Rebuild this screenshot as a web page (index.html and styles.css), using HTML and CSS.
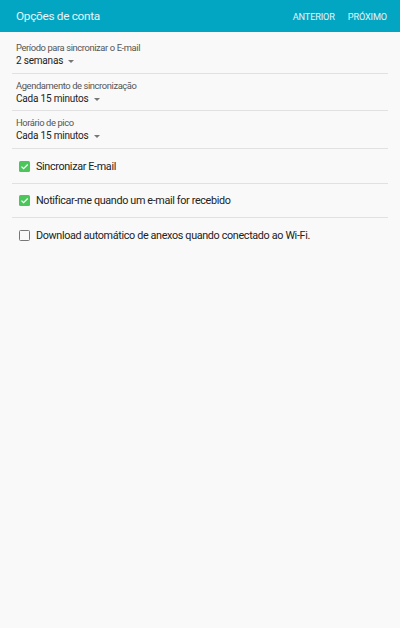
FILE: index.html
```html
<!DOCTYPE html>
<html lang="pt">
<head>
<meta charset="utf-8">
<link rel="stylesheet" href="styles.css">
</head>
<body>
<header class="appbar">
  <div class="title">Opções de conta</div>
  <nav class="actions">
    <span class="action">ANTERIOR</span>
    <span class="action">PRÓXIMO</span>
  </nav>
</header>
<main class="list">
  <div class="item select first">
    <div class="label">Período para sincronizar o E-mail</div>
    <div class="value">2 semanas <span class="caret"></span></div>
  </div>
  <div class="item select">
    <div class="label">Agendamento de sincronização</div>
    <div class="value">Cada 15 minutos <span class="caret"></span></div>
  </div>
  <div class="item select third">
    <div class="label">Horário de pico</div>
    <div class="value">Cada 15 minutos <span class="caret"></span></div>
  </div>
  <div class="item check">
    <span class="box on"><svg viewBox="0 0 12 12" width="11" height="11"><path d="M2.7 6.1 L5 8.4 L9.5 3.8" fill="none" stroke="#fff" stroke-width="1.4"/></svg></span>
    <span class="text">Sincronizar E-mail</span>
  </div>
  <div class="item check second">
    <span class="box on"><svg viewBox="0 0 12 12" width="11" height="11"><path d="M2.7 6.1 L5 8.4 L9.5 3.8" fill="none" stroke="#fff" stroke-width="1.4"/></svg></span>
    <span class="text">Notificar-me quando um e-mail for recebido</span>
  </div>
  <div class="item check last">
    <span class="box off"></span>
    <span class="text">Download automático de anexos quando conectado ao Wi-Fi.</span>
  </div>
</main>
</body>
</html>
```
FILE: styles.css
```css
html, body {
  margin: 0;
  padding: 0;
}
body {
  background: #f9f9f9;
  font-family: Roboto, "Liberation Sans", sans-serif;
  width: 400px;
  height: 628px;
}
.appbar {
  height: 32px;
  background: #02a6c3;
  display: flex;
  align-items: center;
  justify-content: space-between;
  padding: 0 13px 0 16px;
  box-sizing: border-box;
}
.title {
  color: #e3f6fa;
  font-size: 11.8px;
  letter-spacing: -0.3px;
}
.actions {
  display: flex;
  gap: 13px;
}
.action {
  color: #e3f6fa;
  font-size: 9.2px;
  letter-spacing: -0.15px;
}
.list {
  margin: 0 12px;
}
.item {
  border-bottom: 1px solid #e1e1e1;
  box-sizing: border-box;
}
.item.last {
  border-bottom: none;
}
.select {
  padding: 6px 4px 0;
  height: 37px;
}
.select.first {
  height: 42px;
  padding-top: 10px;
}
.select.third {
  height: 38px;
}
.label {
  font-size: 9.4px;
  color: #555;
  line-height: 12px;
  letter-spacing: -0.4px;
}
.value {
  font-size: 10px;
  color: #222;
  line-height: 13px;
  letter-spacing: -0.2px;
  display: flex;
  align-items: center;
}
.caret {
  width: 0;
  height: 0;
  border-left: 3px solid transparent;
  border-right: 3px solid transparent;
  border-top: 3px solid #777;
  margin-left: 5px;
  margin-top: 1px;
}
.check {
  height: 35px;
  display: flex;
  align-items: center;
  padding-left: 7px;
}
.check.second {
  height: 34px;
}
.box {
  width: 11px;
  height: 11px;
  border-radius: 1.5px;
  box-sizing: border-box;
  display: flex;
  align-items: center;
  justify-content: center;
  margin-right: 6px;
  flex: none;
}
.box.on {
  background: #4bc65b;
}
.box.off {
  border: 1.2px solid #777;
}
.text {
  font-size: 10.8px;
  color: #222;
  letter-spacing: -0.35px;
}
```
